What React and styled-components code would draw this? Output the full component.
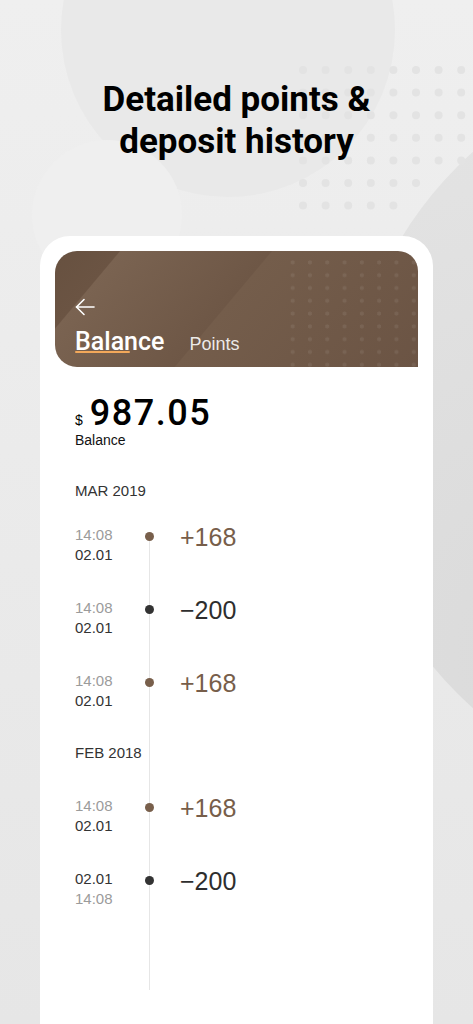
import styled, { createGlobalStyle, css } from 'styled-components';

const GlobalStyle = createGlobalStyle`
  * { box-sizing: border-box; }
  body {
    margin: 0;
    background: #e6e6e6;
    font-family: 'Liberation Sans', Arial, sans-serif;
  }
`;

const Stage = styled.div`
  position: relative;
  width: 473px;
  height: 1024px;
  overflow: hidden;
  display: flex;
  flex-direction: column;
  background: linear-gradient(180deg, #efefef 0%, #eaeaea 55%, #e6e6e6 100%);
`;

// soft round shapes in the backdrop
const Blob = styled.div`
  position: absolute;
  left: ${p => p.$x - p.$r}px;
  top: ${p => p.$y - p.$r}px;
  width: ${p => p.$r * 2}px;
  height: ${p => p.$r * 2}px;
  border-radius: 50%;
  background: ${p => p.$bg};
`;

const DotField = styled.svg`
  position: absolute;
  left: 290px;
  top: 57px;
`;

const Headline = styled.h1`
  position: relative;
  z-index: 1;
  margin: 79px 0 0;
  font-family: Roboto, 'Liberation Sans', sans-serif;
  font-weight: 700;
  font-size: 35px;
  line-height: 42px;
  text-align: center;
  color: #000;
`;

const Phone = styled.div`
  position: relative;
  z-index: 1;
  flex: 1;
  margin: 73px 40px 0;
  padding: 15px;
  background: #fff;
  border-radius: 30px 30px 0 0;
`;

const Header = styled.header`
  position: relative;
  overflow: hidden;
  height: 116px;
  padding: 47px 20px 0;
  border-radius: 22px 20px 0 22px;
  background: linear-gradient(
    130deg,
    #675140 0%,
    #6b5443 14%,
    #7a6351 14.3%,
    #6e5746 47%,
    #745d4b 47.3%,
    #6b5444 100%
  );

  &::after {
    content: '';
    position: absolute;
    top: 5px;
    left: 229px;
    right: 0;
    bottom: 0;
    background-image: radial-gradient(circle, rgba(255, 255, 255, 0.07) 1.8px, transparent 2.3px);
    background-size: 17.3px 12.8px;
  }
`;

const BackArrow = () => (
  <svg width="20" height="18" viewBox="0 0 20 18" fill="none" stroke="#fff" strokeWidth="1.6" strokeLinecap="round" strokeLinejoin="round" style={{ display: 'block' }}>
    <path d="M19 9H1.5" />
    <path d="M9 1.5L1.5 9L9 16.5" />
  </svg>
);

const Tabs = styled.nav`
  position: relative;
  z-index: 1;
  display: flex;
  align-items: baseline;
  gap: 25px;
  margin-top: 13px;
`;

const Tab = styled.span`
  position: relative;
  line-height: 25px;
  color: ${p => (p.$active ? '#fff' : 'rgba(255, 255, 255, 0.88)')};
  font-size: ${p => (p.$active ? '25px' : '18px')};

  ${p => p.$active && css`
    font-family: Roboto, 'Liberation Sans', sans-serif;
    font-weight: 500;

    &::after {
      content: '';
      position: absolute;
      left: 0;
      bottom: 1px;
      width: 55px;
      height: 2.5px;
      border-radius: 1px;
      background: #f3a85a;
    }
  `}
`;

const Body = styled.div`
  padding: 0 20px;
`;

const Amount = styled.div`
  display: flex;
  align-items: baseline;
  gap: 7px;
  margin-top: 29px;
  color: #000;
`;

const Currency = styled.span`
  font-size: 14px;
`;

const Value = styled.span`
  font-family: Roboto, 'Liberation Sans', sans-serif;
  font-weight: 500;
  font-size: 36px;
  line-height: 35px;
  letter-spacing: 1.5px;
`;

const AmountLabel = styled.div`
  margin-top: 1px;
  font-size: 14px;
  line-height: 17px;
  color: #111;
`;

const Month = styled.div`
  margin: ${p => (p.$inTimeline ? '0 0 34px' : '33px 0 25px')};
  font-size: 15px;
  line-height: 18px;
  color: #333;
`;

const Timeline = styled.div`
  position: relative;
  padding-bottom: 81px;

  &::before {
    content: '';
    position: absolute;
    left: 74px;
    top: 11px;
    bottom: 0;
    width: 1px;
    background: #e6e6e6;
  }
`;

const Row = styled.div`
  display: grid;
  grid-template-columns: 69px 10px 1fr;
  margin-bottom: 33px;

  &:last-child {
    margin-bottom: 0;
  }
`;

const When = styled.div`
  font-size: 15px;
  line-height: 20px;
`;

const WhenLine = styled.div`
  color: ${p => (p.$muted ? '#9b9b9b' : '#333')};
`;

const Dot = styled.span`
  position: relative;
  z-index: 1;
  justify-self: center;
  width: 9px;
  height: 9px;
  margin-top: 6.5px;
  border-radius: 50%;
  background: ${p => (p.$credit ? '#785f4b' : '#333')};
`;

const Change = styled.div`
  margin: 1.5px 0 0 26px;
  font-size: 25px;
  line-height: 20px;
  color: ${p => (p.$credit ? '#775e4a' : '#2e2e2e')};
`;

const march = [
  { lines: [['14:08', true], ['02.01', false]], amount: '+168', credit: true },
  { lines: [['14:08', true], ['02.01', false]], amount: '\u2212200', credit: false },
  { lines: [['14:08', true], ['02.01', false]], amount: '+168', credit: true },
];

const february = [
  { lines: [['14:08', true], ['02.01', false]], amount: '+168', credit: true },
  { lines: [['02.01', false], ['14:08', true]], amount: '\u2212200', credit: false },
];

const dotRows = [8, 8, 8, 8, 8, 6, 5];

const Entry = ({ item }) => (
  <Row>
    <When>
      {item.lines.map(([text, muted], i) => (
        <WhenLine key={i} $muted={muted}>{text}</WhenLine>
      ))}
    </When>
    <Dot $credit={item.credit} />
    <Change $credit={item.credit}>{item.amount}</Change>
  </Row>
);

export default function App() {
  return (
    <Stage>
      <GlobalStyle />
      <Blob $x={720} $y={430} $r={372} $bg="radial-gradient(circle at 30% 80%, #dadada 0%, #e2e2e2 60%, #e6e6e6 100%)" />
      <Blob $x={228} $y={30} $r={167} $bg="#e9e9e9" />
      <Blob $x={107} $y={215} $r={75} $bg="#efefef" />
      <DotField width="183" height="160">
        {dotRows.map((count, row) =>
          Array.from({ length: count }, (_, col) => (
            <circle key={`${row}-${col}`} cx={13 + col * 22.6} cy={13 + row * 22.6} r="4" fill="#e3e3e3" />
          ))
        )}
      </DotField>

      <Headline>
        Detailed points &amp;
        <br />
        deposit history
      </Headline>

      <Phone>
        <Header>
          <BackArrow />
          <Tabs>
            <Tab $active>Balance</Tab>
            <Tab>Points</Tab>
          </Tabs>
        </Header>

        <Body>
          <Amount>
            <Currency>$</Currency>
            <Value>987.05</Value>
          </Amount>
          <AmountLabel>Balance</AmountLabel>

          <Month>MAR 2019</Month>
          <Timeline>
            {march.map((item, i) => <Entry key={`m${i}`} item={item} />)}
            <Month $inTimeline>FEB 2018</Month>
            {february.map((item, i) => <Entry key={`f${i}`} item={item} />)}
          </Timeline>
        </Body>
      </Phone>
    </Stage>
  );
}
